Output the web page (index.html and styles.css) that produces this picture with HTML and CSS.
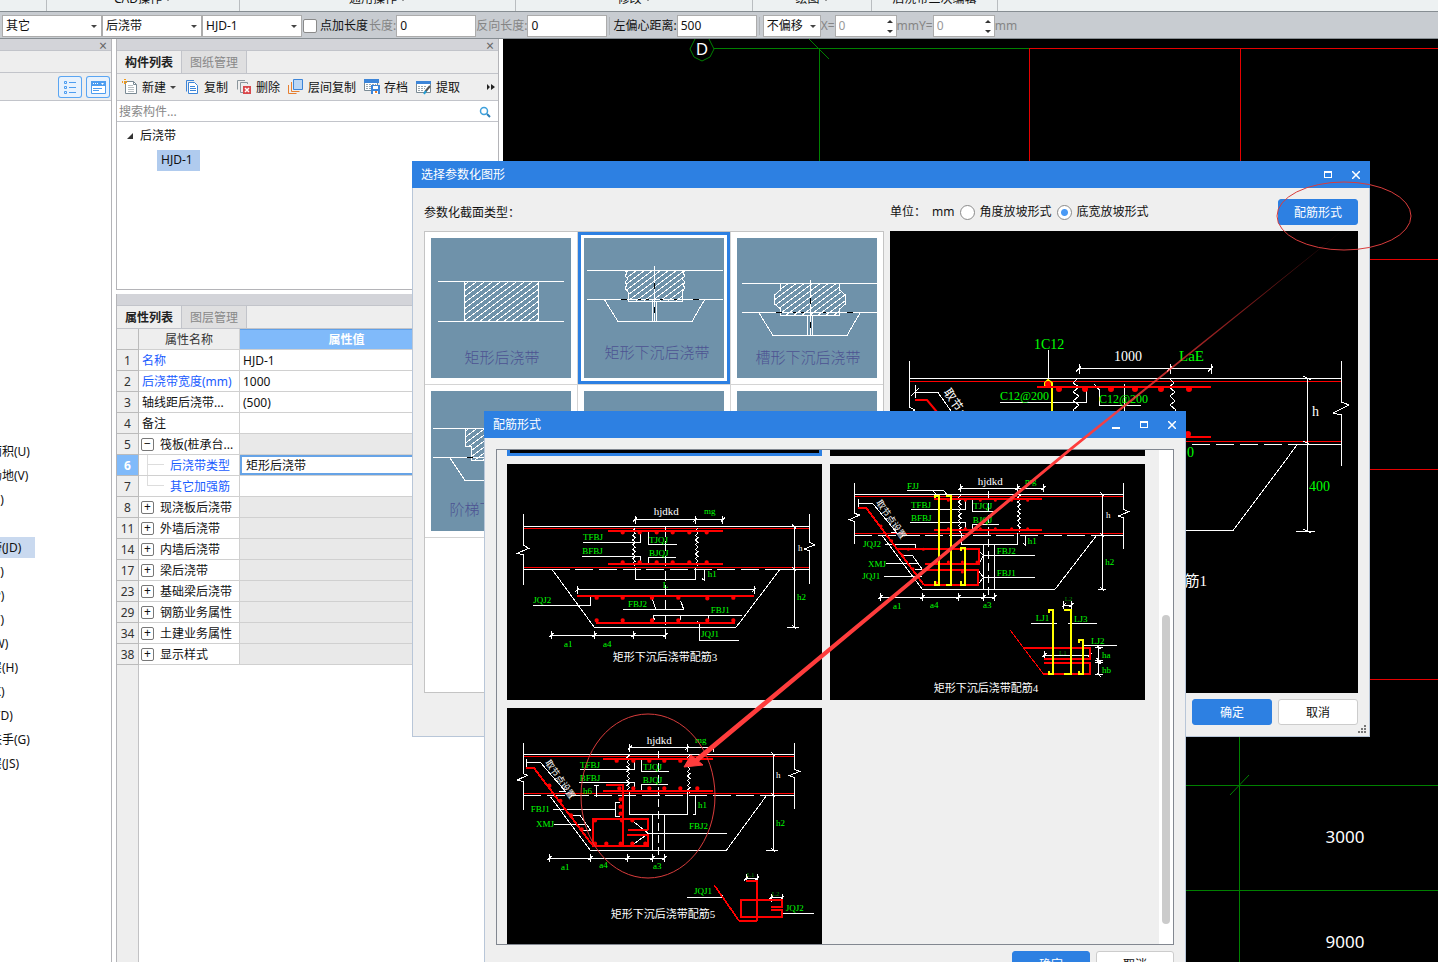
FILE: index.html
```html
<!DOCTYPE html>
<html lang="zh-CN">
<head>
    <meta charset="UTF-8">
    <meta name="viewport" content="width=device-width, initial-scale=1.0">
    <title>后浇带 - 选择参数化图形</title>
    <link rel="stylesheet" href="styles.css">
</head>
<body>
    <!-- shared svg parts -->
    <svg class="defs" aria-hidden="true">
        <defs>
            <pattern id="hatch" width="8" height="6" patternUnits="userSpaceOnUse">
                <path class="line" d="M-4 3L4 -3M0 6L8 0M4 9L12 3"/>
            </pattern>
            <marker id="tick" markerUnits="userSpaceOnUse" markerWidth="30" markerHeight="30" refX="15" refY="15" orient="auto" viewBox="0 0 30 30">
                <path class="w" d="M15 3V27M9 21L21 9"/>
            </marker>
            <marker id="tick-sm" markerUnits="userSpaceOnUse" markerWidth="12" markerHeight="12" refX="6" refY="6" orient="auto" viewBox="0 0 12 12">
                <path class="line" d="M6 1V11M3 9L8 4"/>
            </marker>
            <path id="zig" d="M0 0l-8 7 8 7-8 7 8 7-8 7 8 7-8 7 8 7-8 7 8 7-8 7 8 7-8 7 8 7-8 7 8 7"/>
            <linearGradient id="fade" gradientUnits="userSpaceOnUse" x1="1348" y1="226" x2="1080" y2="444">
                <stop offset="0" stop-color="#f33" stop-opacity="0.15"/>
                <stop offset="1" stop-color="#ff3c3c"/>
            </linearGradient>
        </defs>
    </svg>

    <div class="app">
        <header class="ribbon">
            <span class="group g1">CAD操作 <i class="caret"></i></span>
            <span class="group g2">通用操作 <i class="caret"></i></span>
            <span class="group g3">修改 <i class="caret"></i></span>
            <span class="group g4">绘图 <i class="caret"></i></span>
            <span class="group g5">后浇带二次编辑</span>
        </header>

        <div class="toolbar">
            <span class="combo"><select aria-label="构件类别"><option>其它</option></select></span>
            <span class="combo"><select aria-label="构件类型"><option>后浇带</option></select></span>
            <span class="combo"><select aria-label="构件名称"><option>HJD-1</option></select></span>
            <label class="check"><input type="checkbox">点加长度</label>
            <label class="dim" for="len">长度:</label>
            <input class="field" id="len" type="text" value="0">
            <label class="dim" for="rlen">反向长度:</label>
            <input class="field" id="rlen" type="text" value="0">
            <span class="sep"></span>
            <label for="offset">左偏心距离:</label>
            <input class="field" id="offset" type="text" value="500">
            <span class="sep"></span>
            <span class="combo small"><select aria-label="偏移"><option>不偏移</option></select></span>
            <label class="dim" for="ox">X=</label>
            <span class="spin"><input class="field" id="ox" type="text" value="0" disabled></span>
            <label class="dim" for="oy">mmY=</label>
            <span class="spin"><input class="field" id="oy" type="text" value="0" disabled></span>
            <span class="dim">mm</span>
        </div>

        <main class="workspace">
            <aside class="nav-panel">
                <div class="strip"><button class="close" aria-label="关闭">×</button></div>
                <div class="nav-head"></div>
                <div class="nav-tools">
                    <button class="view-btn" aria-label="列表">
                        <svg width="24" height="22" viewBox="0 0 24 22"><path fill="none" stroke="#4d9df0" d="M6.500 5.500h2v2h-2zM6.500 10.500h2v2h-2zM6.500 15.500h2v2h-2zM11 6.500h7M11 11.500h7M11 16.500h7"/></svg>
                    </button>
                    <button class="view-btn" aria-label="卡片">
                        <svg width="24" height="22" viewBox="0 0 24 22"><path fill="#fff" stroke="#4d9df0" d="M5.500 5.500h14v12h-14z"/><path fill="#4d9df0" d="M5 5h15v5H5zM7 12h9v1H7zM7 14h6v1H7z"/><path fill="#fff" d="M7 7h1v1H7zM9 7h1v1H9zM11 7h1v1h-1zM15 7h3l-1.500 2z"/></svg>
                    </button>
                </div>
                <ul class="nav-list">
                    <li>建筑面积(U)</li>
                    <li>平整场地(V)</li>
                    <li>散水(S)</li>
                    <li></li>
                    <li class="active">后浇带(JD)</li>
                    <li>挑檐(T)</li>
                    <li>雨篷(P)</li>
                    <li>阳台(Y)</li>
                    <li>屋面(W)</li>
                    <li>保温层(H)</li>
                    <li>栏板(K)</li>
                    <li>压顶(YD)</li>
                    <li>栏杆扶手(G)</li>
                    <li>防水层(JS)</li>
                </ul>
            </aside>

            <section class="side">
                <div class="comp-panel">
                    <div class="strip"><button class="close" aria-label="关闭">×</button></div>
                    <div class="tabs">
                        <button class="tab on">构件列表</button>
                        <button class="tab">图纸管理</button>
                    </div>
                    <div class="actions">
                        <button class="act">
                            <svg width="16" height="16" viewBox="0 0 16 16"><path fill="#fff" stroke="#7a8a94" d="M3.500 2.500h8l3 3v9h-11z"/><path fill="none" stroke="#b9c0c4" d="M6 6.500h5M6 8.500h6M6 10.500h6M6 12.500h6"/><path stroke="#7a8a94" fill="none" d="M11.500 2.500v3h3"/><path stroke="#f29b1d" stroke-width="2" stroke-dasharray="1 1" d="M0 3h6M3 0v6"/></svg>
                            <span>新建</span><i class="caret"></i>
                        </button>
                        <button class="act">
                            <svg width="16" height="16" viewBox="0 0 16 16"><path fill="none" stroke="#3d85d8" d="M10 1.500H2.500v11"/><path fill="#fff" stroke="#3d85d8" d="M4.500 3.500h6l3 3v8h-9zM6 7.500h5M6 9.500h6M6 11.500h6"/></svg>
                            <span>复制</span>
                        </button>
                        <button class="act">
                            <svg width="16" height="16" viewBox="0 0 16 16"><path fill="none" stroke="#8b969d" d="M9 1.500H1.500v9M11.500 5V3.500h-7v10H7"/><path fill="#d9484c" d="M7 7h8v8H7z"/><path stroke="#fff" stroke-width="1.500" d="M9 9l4 4M13 9l-4 4"/></svg>
                            <span>删除</span>
                        </button>
                        <button class="act">
                            <svg width="16" height="16" viewBox="0 0 16 16"><path fill="#bcd7f5" stroke="#3d85d8" d="M5.500 .5h9v10h-9z"/><path fill="none" stroke="#e77f30" d="M3.500 3v9.500h8M.5 6v8.500h8"/></svg>
                            <span>层间复制</span>
                        </button>
                        <button class="act">
                            <svg width="16" height="16" viewBox="0 0 16 16"><path fill="#fff" stroke="#7a8a94" d="M.5 1.500h13v10H.5z"/><path fill="#3d85d8" d="M0 0h15v4H0zM7 6h9v9H7z"/><path stroke="#9aa6ad" stroke-dasharray="2 1" d="M2 5.500h10M2 7.500h5M2 9.500h5"/><path fill="#fff" d="M9 7h5v3H9zM9 12h5v3H9z"/><path fill="#e77f30" d="M11 12h2v2h-2z"/></svg>
                            <span>存档</span>
                        </button>
                        <button class="act">
                            <svg width="16" height="16" viewBox="0 0 16 16"><path fill="#fff" stroke="#7a8a94" d="M.5 2.500h14v11H.5z"/><path fill="#3d85d8" d="M0 2h15v3H0z"/><path stroke="#9aa6ad" stroke-dasharray="2 1" d="M2 7.500h9M2 9.500h7M2 11.500h5"/><path stroke="#555" stroke-width="2" d="M14 7l-5 6"/><path stroke="#1f9fd8" stroke-width="2" d="M10 12l-2 3"/></svg>
                            <span>提取</span>
                        </button>
                        <button class="more" aria-label="更多"><svg width="8" height="6" viewBox="0 0 8 6"><path fill="#222" d="M0 0l3 3-3 3zM4 0l4 3-4 3z"/></svg></button>
                    </div>
                    <div class="search">
                        <input type="text" placeholder="搜索构件..." aria-label="搜索构件">
                        <svg width="12" height="12" viewBox="0 0 12 12"><circle cx="5" cy="5" r="3.500" fill="none" stroke="#3da0dc" stroke-width="1.500"/><path stroke="#2b7fb8" stroke-width="2" d="M8 8l3 3"/></svg>
                    </div>
                    <ul class="tree">
                        <li><svg width="6" height="6" viewBox="0 0 6 6"><path fill="#333" d="M6 0v6H0z"/></svg>后浇带</li>
                        <li class="leaf"><span>HJD-1</span></li>
                    </ul>
                </div>

                <div class="prop-panel">
                    <div class="strip"></div>
                    <div class="tabs">
                        <button class="tab on">属性列表</button>
                        <button class="tab">图层管理</button>
                    </div>
                    <div class="prop-body">
                        <table class="props">
                            <thead>
                                <tr><th class="num"></th><th class="name">属性名称</th><th class="value">属性值</th><th class="extra">附加</th></tr>
                            </thead>
                            <tbody>
                                <tr><td class="num">1</td><td class="link">名称</td><td>HJD-1</td><td></td></tr>
                                <tr><td class="num">2</td><td class="link">后浇带宽度(mm)</td><td>1000</td><td></td></tr>
                                <tr><td class="num">3</td><td>轴线距后浇带...</td><td>(500)</td><td></td></tr>
                                <tr><td class="num">4</td><td>备注</td><td></td><td></td></tr>
                                <tr class="grp"><td class="num">5</td><td><button class="box" aria-label="收起">−</button>筏板(桩承台...</td><td></td><td></td></tr>
                                <tr class="sel"><td class="num">6</td><td class="link sub">后浇带类型</td><td>矩形后浇带</td><td></td></tr>
                                <tr><td class="num">7</td><td class="link sub last">其它加强筋</td><td></td><td></td></tr>
                                <tr class="grp"><td class="num">8</td><td><button class="box" aria-label="展开">+</button>现浇板后浇带</td><td></td><td></td></tr>
                                <tr class="grp"><td class="num">11</td><td><button class="box" aria-label="展开">+</button>外墙后浇带</td><td></td><td></td></tr>
                                <tr class="grp"><td class="num">14</td><td><button class="box" aria-label="展开">+</button>内墙后浇带</td><td></td><td></td></tr>
                                <tr class="grp"><td class="num">17</td><td><button class="box" aria-label="展开">+</button>梁后浇带</td><td></td><td></td></tr>
                                <tr class="grp"><td class="num">23</td><td><button class="box" aria-label="展开">+</button>基础梁后浇带</td><td></td><td></td></tr>
                                <tr class="grp"><td class="num">29</td><td><button class="box" aria-label="展开">+</button>钢筋业务属性</td><td></td><td></td></tr>
                                <tr class="grp"><td class="num">34</td><td><button class="box" aria-label="展开">+</button>土建业务属性</td><td></td><td></td></tr>
                                <tr class="grp"><td class="num">38</td><td><button class="box" aria-label="展开">+</button>显示样式</td><td></td><td></td></tr>
                            </tbody>
                        </table>
                    </div>
                </div>
            </section>

            <section class="canvas">
                <svg viewBox="503 39 935 923" preserveAspectRatio="xMinYMin slice">
                    <g class="axis-green">
                        <path d="M714 48.500H1029M819.500 49V962M1239.500 737V962M1186 785.500H1438M1186 890.500H1438"/>
                        <path class="smooth" d="M809 39L829 59M1230 795L1249 775M695 39L690 49L694 57L702 61L710 57L714 49L709 39"/>
                    </g>
                    <path class="axis-red" d="M1029 48.500H1438M1029.500 48V300M1240.500 49V300M1300 259.500H1438M1300 469.500H1438M1300 679.500H1438"/>
                    <text class="axis-text" x="702" y="55">D</text>
                    <text class="axis-text" x="1345" y="843">3000</text>
                    <text class="axis-text" x="1345" y="948">9000</text>
                </svg>
            </section>
        </main>

        <!-- parametric section dialog -->
        <section class="dialog dialog-shape" role="dialog" aria-label="选择参数化图形">
            <div class="title">
                <span>选择参数化图形</span>
                <button aria-label="最大化"><svg width="8" height="8" viewBox="0 0 8 8"><path fill="#fff" d="M0 0h8v7H0zM1 2v4h6V2z" fill-rule="evenodd"/></svg></button>
                <button aria-label="关闭"><svg width="8" height="8" viewBox="0 0 8 8"><path stroke="#fff" stroke-width="1.500" d="M0 0l8 8M8 0L0 8"/></svg></button>
            </div>
            <div class="shape-body">
                <div class="shape-left">
                    <div class="shape-label">参数化截面类型：</div>
                    <div class="thumbs">
                        <button class="thumb">
                            <svg viewBox="0 0 140 140">
                                <path class="hatched" d="M33 43H108V83H33z"/>
                                <path class="line" d="M7 43.500H133M7 83.500H133M33.500 43V83M107.500 43V83"/>
                                <text x="71" y="125">矩形后浇带</text>
                            </svg>
                        </button>
                        <button class="thumb on">
                            <svg viewBox="0 0 140 140">
                                <path class="hatched" d="M41 32l2 3-2 3 3 3-3 3 2 3-2 3 3 4v9H98v-9l3-4-2-3 2-3-3-3 3-3-2-3 2-3z"/>
                                <path class="line" d="M3 32.500H139M3 61.500H139M41 32l2 3-2 3 3 3-3 3 2 3-2 3 3 4v9H98v-9l3-4-2-3 2-3-3-3 3-3-2-3 2-3M20 61L34 83.500H108L121 61M70.500 28V84M68.500 63V83M72.500 63V83"/>
                                <path class="dash" d="M37 61.500h6M54 61.500h3M62 61.500h3M76 61.500h3M90 61.500h3M109 61.500h6M70.500 45v6M70.500 69v6"/>
                                <text x="73" y="120">矩形下沉后浇带</text>
                            </svg>
                        </button>
                        <button class="thumb">
                            <svg viewBox="0 0 140 140">
                                <path class="hatched" d="M43 45V52L37 57V66L43 71V77H102V71L108 66V57L102 52V45z"/>
                                <path class="line" d="M5 45.500H140M5 74.500H140M43.500 45V52L37.500 57V66L43.500 71V77.500H102.500V71L108.500 66V57L102.500 52V45M22 75L36 97.500H110L123 75M73.500 42V97M70.500 77V97M75.500 77V97"/>
                                <path class="dash" d="M39 74.500h6M56 74.500h3M64 74.500h3M86 74.500h3M110 74.500h6M73.500 60v6M73.500 84v6"/>
                                <text x="71" y="125">槽形下沉后浇带</text>
                            </svg>
                        </button>
                        <button class="thumb">
                            <svg viewBox="0 0 140 140">
                                <path class="hatched" d="M34 37V55H40V69H100V55H106V37z"/>
                                <path class="line" d="M2 37.500H138M2 66.500H138M34.500 37V55.500H40.500V69.500H100.500V55.500H106.500V37M19 67L34 89.500H106L121 67"/>
                                <path class="dash" d="M36 66.500h6"/>
                                <text x="71" y="124">阶梯下沉后浇带</text>
                            </svg>
                        </button>
                        <button class="thumb" aria-label="截面5"><svg viewBox="0 0 140 140"></svg></button>
                        <button class="thumb" aria-label="截面6"><svg viewBox="0 0 140 140"></svg></button>
                    </div>
                </div>
                <div class="shape-right">
                    <div class="options">
                        <span>单位：</span>
                        <span>mm</span>
                        <label><input type="radio" name="slope">角度放坡形式</label>
                        <label><input type="radio" name="slope" checked>底宽放坡形式</label>
                        <button class="btn primary">配筋形式</button>
                    </div>
                    <svg class="preview" viewBox="890 231 468 462">
                        <path class="thin-red" d="M909 381.500H1341M909 441.500H1341"/>
                        <path class="line" d="M909 378.500H1341M909.500 361V407L915 410L903 417L909 420V466M1341.500 361V402L1349 405L1333 413L1341.500 415V466M1288 444.500H1341M1297 445L1233 530.500H1010M1296 531.500H1315M1303 376l8 4M1303 441l8 4M1303 529l8 4"/>
                        <path class="line" stroke-dasharray="18 6" d="M1192 444.500H1290"/>
                        <path class="line" d="M1307.500 378V531M1048.500 350V381M1000 402.500H1086.500V391M1141 405.500H1099.500V390L1094 384M1124.500 384V411"/>
                        <path class="line" d="M1077 379l-4 4 6 4-6 5 6 4-6 5 6 4-6 5 4 4M1170 379l4 4-5 4 6 5-5 4 5 5-5 4 6 5-5 4"/>
                        <path class="line ticks-sm" d="M1079 368.500H1170H1211"/>
                        <path class="line" d="M915.500 385V398M911 396l8-8M916 392.500H938L951 411"/>
                        <path class="yellow-sm" d="M1052 385V411M1045 386V383L1048 380L1052 383V386"/>
                        <path class="bar-sm" d="M1037 387H1211M1186 437H1211M915 400H927L937 412"/>
                        <path class="dots-sm" d="M1059 389h0M1085 389h0M1111 389h0M1135 389h0M1161 389h0M1189 389h0M1048 384h0M1188 434h0"/>
                        <g class="labels">
                            <text x="1034" y="349">1C12</text>
                            <text x="1179" y="361" class="big">LaE</text>
                            <text x="1000" y="400" class="fit">C12@200</text>
                            <text x="1099" y="403" class="fit">C12@200</text>
                            <text x="1009" y="419" class="fit">C12@200</text>
                            <text x="1187" y="457">0</text>
                            <text x="1309" y="491">400</text>
                            <text x="1114" y="361" class="white">1000</text>
                            <text x="1312" y="416" class="white">h</text>
                            <text x="1207" y="586" class="white name">矩形下沉后浇带配筋1</text>
                            <text x="943" y="392" class="white fit" transform="rotate(56 943 392)">取节点设置</text>
                        </g>
                    </svg>
                </div>
            </div>
            <div class="buttons">
                <button class="btn primary">确定</button>
                <button class="btn">取消</button>
            </div>
            <svg class="grip" width="8" height="8" viewBox="0 0 8 8"><path fill="#777" d="M6 0h2v2H6zM3 3h2v2H3zM6 3h2v2H6zM0 6h2v2H0zM3 6h2v2H3zM6 6h2v2H6z"/></svg>
        </section>

        <!-- rebar form dialog -->
        <section class="dialog dialog-rebar" role="dialog" aria-label="配筋形式">
            <div class="title">
                <span>配筋形式</span>
                <button aria-label="最小化"><svg width="8" height="8" viewBox="0 0 8 8"><path fill="#fff" d="M0 6h8v2H0z"/></svg></button>
                <button aria-label="最大化"><svg width="8" height="8" viewBox="0 0 8 8"><path fill="#fff" d="M0 0h8v7H0zM1 2v4h6V2z" fill-rule="evenodd"/></svg></button>
                <button aria-label="关闭"><svg width="8" height="8" viewBox="0 0 8 8"><path stroke="#fff" stroke-width="1.500" d="M0 0l8 8M8 0L0 8"/></svg></button>
            </div>
            <div class="list-frame">
                <div class="cards">
                    <button class="card on" aria-label="矩形下沉后浇带配筋1"></button>
                    <button class="card" aria-label="矩形下沉后浇带配筋2"></button>

                    <button class="card">
                        <svg viewBox="21 42 945 708">
                            <path class="r" d="M70 235H928M70 352H928"/>
                            <path class="w" d="M70 192V285L86 295L52 310L70 314V404M928 192V276L944 285L912 297L928 302V402M70 230H928M70 358H155M840 358H928M156 358L283 532H708L840 358M406 355V388H586V355M613 358V390M606 386l8 6"/>
                            <path class="w" stroke-dasharray="54 17" d="M155 358H840"/>
                            <path class="w" stroke-dasharray="30 14" d="M496 230V565"/>
                            <use class="w" href="#zig" x="406" y="235"/>
                            <use class="w" href="#zig" x="594" y="235"/>
                            <path class="w ticks" d="M405 209H586H668"/>
                            <path class="w ticks" d="M232 419H763"/>
                            <path class="w ticks" d="M154 555H284H401H496"/>
                            <path class="w ticks" d="M883 230V358V532"/>
                            <path class="w" d="M862 532H897M248 277H421V250M246 319H421V335M531 283H445V245L438 240M528 322H445V345M99 466H271V440L264 436M369 478H551L542 452M456 445L468 478M726 496H460L463 510M540 496V510M625 496V508M716 571H599V520L592 514"/>
                            <path class="bar" d="M324 242H668M324 342H668M232 438H762M288 518H706"/>
                            <path class="dots" d="M368 247h0M419 247h0M470 247h0M518 247h0M568 247h0M620 247h0M368 337h0M419 337h0M470 337h0M518 337h0M568 337h0M620 337h0M290 443h0M368 443h0M456 443h0M535 443h0M622 445h0M700 443h0M290 511h0M368 511h0M456 511h0M535 511h0M622 511h0M700 511h0"/>
                            <g class="tags">
                                <text x="461" y="196" class="white wide">hjdkd</text>
                                <text x="612" y="192">mg</text>
                                <text x="249" y="271">TFBJ</text>
                                <text x="247" y="313">BFBJ</text>
                                <text x="447" y="280">TJQJ</text>
                                <text x="447" y="319">BJQJ</text>
                                <text x="894" y="302" class="white">h</text>
                                <text x="623" y="382">h1</text>
                                <text x="488" y="415">L</text>
                                <text x="891" y="451">h2</text>
                                <text x="100" y="458">JQJ2</text>
                                <text x="384" y="472">FBJ2</text>
                                <text x="632" y="490">FBJ1</text>
                                <text x="603" y="562">JQJ1</text>
                                <text x="192" y="590">a1</text>
                                <text x="309" y="590">a4</text>
                            </g>
                            <text class="caption" x="338" y="634">矩形下沉后浇带配筋3</text>
                        </svg>
                    </button>

                    <button class="card">
                        <svg viewBox="15 42 945 708">
                            <path class="r" d="M88 139H895M88 250H895"/>
                            <path class="w" d="M88 99V190L104 195L73 209L88 214V282M895 99V178L911 185L880 198L895 203V296M88 133H895M840 256H895M172 258L292 418H690L815 256M409 250V283H577V250M475 283V418M508 283V418M601 256V284M594 280l8 6"/>
                            <path class="w" stroke-dasharray="54 17" d="M88 256H840"/>
                            <path class="w" stroke-dasharray="24 12" d="M490 123V440"/>
                            <use class="w" href="#zig" x="408" y="135"/>
                            <use class="w" href="#zig" x="586" y="135"/>
                            <path class="w ticks" d="M406 115H577H655"/>
                            <path class="w ticks" d="M166 441H292H401H475H508"/>
                            <path class="w ticks" d="M832 133V256V418"/>
                            <path class="w ticks" d="M658 615H795"/>
                            <path class="w ticks" d="M716 466H739"/>
                            <path class="w ticks" d="M821 592V630"/>
                            <path class="w ticks" d="M821 636V674"/>
                            <path class="w" d="M101 148V172M101 160H143L215 248H198M246 121H355L370 138M322 121L338 138M258 178H421V150M255 217H421V238M514 184H442V150M522 223H442V240M180 283H271V296M183 341H280M177 379H290M232 316H262L292 358H270M630 317H475L462 302M475 317L462 340M630 382H475L460 362M475 382L460 402M617 520H696M730 520H816M876 586H778"/>
                            <path class="bar" d="M327 147H651M327 240H651M218 297H462V342H300M290 360H460V404H296M98 173H123L296 404M594 594H795V627H657M657 639H795V672H655"/>
                            <path class="r" d="M556 541L655 672"/>
                            <path class="dots small" d="M370 151h0M421 151h0M466 151h0M511 151h0M560 151h0M608 151h0M370 236h0M421 236h0M466 236h0M511 236h0M560 236h0M608 236h0M168 228h0M200 272h0M232 316h0M264 356h0M250 298h0M295 298h0M334 336h0M370 336h0M412 336h0M334 398h0M412 366h0M456 336h0"/>
                            <path class="yellow" d="M329 145V138H342V404H329V394M362 138H378V404H362M408 304V294H420V404H408V394M672 488V480H684V672H672V662M717 480H739V672H717M762 580V571H774V672H762V662"/>
                            <g class="tags">
                                <text x="246" y="116">FJJ</text>
                                <text x="458" y="104" class="white wide">hjdkd</text>
                                <text x="600" y="103">mg</text>
                                <text x="258" y="173">TFBJ</text>
                                <text x="258" y="212">BFBJ</text>
                                <text x="445" y="178">TJQJ</text>
                                <text x="443" y="218">BJQJ</text>
                                <text x="843" y="204" class="white">h</text>
                                <text x="608" y="282">h1</text>
                                <text x="841" y="345">h2</text>
                                <text x="114" y="290">JQJ2</text>
                                <text x="129" y="350">XMJ</text>
                                <text x="112" y="387">JQJ1</text>
                                <text x="515" y="311">FBJ2</text>
                                <text x="515" y="377">FBJ1</text>
                                <text x="204" y="476">a1</text>
                                <text x="315" y="474">a4</text>
                                <text x="474" y="473">a3</text>
                                <text x="719" y="453" class="dark">L2</text>
                                <text x="632" y="513">LJ1</text>
                                <text x="747" y="515">LJ3</text>
                                <text x="798" y="581">LJ2</text>
                                <text x="702" y="615" class="dark">L1</text>
                                <text x="831" y="624">ha</text>
                                <text x="831" y="668">hb</text>
                                <text x="152" y="158" class="white" transform="rotate(55 152 158)">取节点设置</text>
                            </g>
                            <text class="caption" x="326" y="727">矩形下沉后浇带配筋4</text>
                        </svg>
                    </button>

                    <button class="card">
                        <svg viewBox="21 24 945 708">
                            <path class="r" d="M70 169H883M70 280H883"/>
                            <path class="w" d="M70 129V221L82 226L52 240L70 245V330M883 129V208L899 214L868 227L883 233V326M70 163H883M820 286H883M151 290L271 451H679L800 286M388 275V343H562V275M457 343V451M493 343V451M586 286V346M579 343h8"/>
                            <path class="w" stroke-dasharray="54 17" d="M70 286H820"/>
                            <path class="w" stroke-dasharray="24 12" d="M475 153V470"/>
                            <use class="w" href="#zig" x="389" y="165"/>
                            <use class="w" href="#zig" x="570" y="165"/>
                            <path class="w ticks" d="M389 143H562H640"/>
                            <path class="w ticks" d="M149 474H271H383H457H493"/>
                            <path class="w ticks" d="M820 163V286V451"/>
                            <path class="w ticks" d="M738 535H771"/>
                            <path class="w ticks" d="M813 593H847"/>
                            <path class="w" d="M799 451H834M80 177V202M80 188H122L196 274H178M240 208H403V180M238 247H403V262M507 214H424V180M505 253H424V270M290 256V290M283 256h14M160 328H346M360 308H346V350H360M161 373H254M218 346H240L272 391H250M681 400H445L403 367M445 400L403 431M561 592H670L664 582M942 640H850"/>
                            <path class="bar" d="M309 177H640M309 272H640M78 204H102L278 436M318 255H369V438M445 391V357H278V438H445V404H381M383 391H445M738 543H771V663M847 623V600H723V651H847V630H813M813 620H847"/>
                            <path class="r2" d="M643 556L717 662H771"/>
                            <path class="dots" d="M350 182h0M400 182h0M448 182h0M493 182h0M541 182h0M592 182h0M358 265h0M400 265h0M448 265h0M493 265h0M541 265h0M592 265h0M148 257h0M181 303h0M213 346h0M245 388h0M362 298h0M362 320h0M362 341h0M285 361h0M366 361h0M397 361h0M319 431h0M362 431h0M397 431h0M436 431h0M285 431h0"/>
                            <g class="tags">
                                <text x="440" y="131" class="white wide">hjdkd</text>
                                <text x="585" y="130">mg</text>
                                <text x="240" y="203">TFBJ</text>
                                <text x="239" y="242">BFBJ</text>
                                <text x="429" y="209">TJQJ</text>
                                <text x="428" y="248">BJQJ</text>
                                <text x="828" y="233" class="white">h</text>
                                <text x="249" y="281">h6</text>
                                <text x="594" y="324">h1</text>
                                <text x="828" y="377">h2</text>
                                <text x="92" y="335">FBJ1</text>
                                <text x="108" y="381">XMJ</text>
                                <text x="567" y="388">FBJ2</text>
                                <text x="183" y="509">a1</text>
                                <text x="298" y="503">a4</text>
                                <text x="459" y="506">a3</text>
                                <text x="740" y="530" class="dark">L1</text>
                                <text x="815" y="587" class="dark">L2</text>
                                <text x="582" y="581">JQJ1</text>
                                <text x="857" y="632">JQJ2</text>
                                <text x="134" y="188" class="white" transform="rotate(55 134 188)">取节点设置</text>
                            </g>
                            <text class="caption" x="332" y="655">矩形下沉后浇带配筋5</text>
                        </svg>
                    </button>
                </div>
                <div class="track"><div class="bar-thumb"></div></div>
            </div>
            <div class="buttons">
                <button class="btn primary">确定</button>
                <button class="btn">取消</button>
            </div>
        </section>

        <!-- red pen marks over both dialogs -->
        <svg class="marks" viewBox="0 0 1438 962" preserveAspectRatio="xMinYMin slice" aria-hidden="true">
            <ellipse cx="1344" cy="216" rx="67" ry="34"/>
            <ellipse cx="648" cy="796" rx="67" ry="82"/>
            <path fill="url(#fade)" d="M1348 226L1073 449L697 763L694 759L1071 447z"/>
            <path class="head" d="M684 767L691 755L703 765z"/>
        </svg>
    </div>
</body>
</html>
```
FILE: styles.css
```css
* {
    margin: 0;
    padding: 0;
    box-sizing: border-box;
}

body {
    font-family: "Noto Sans", "Noto Sans CJK SC", sans-serif;
    font-size: 12px;
    line-height: 16px;
    color: #111;
    overflow: hidden;
}

button,
input,
select {
    font: inherit;
    color: inherit;
    border: none;
    background: none;
    border-radius: 0;
}

ul {
    list-style: none;
}

.defs {
    display: block;
    width: 0;
    height: 0;
}

.app {
    position: relative;
    display: flex;
    flex-direction: column;
    height: 100vh;
    overflow: hidden;
}

.caret {
    display: inline-block;
    border: 3px solid transparent;
    border-top-color: #444;
    border-bottom: none;
    vertical-align: middle;
}

/* ribbon */
.ribbon {
    display: flex;
    align-items: flex-end;
    height: 12px;
    flex: none;
    padding-left: 46px;
    background: #edf1f2;
    border-bottom: 1px solid #868d92;
    overflow: hidden;
    box-shadow: inset 46px 0 #edf1f2, inset 47px 0 #b9bdc0;
}

.group {
    height: 20px;
    padding-bottom: 4px;
    text-align: center;
    line-height: 16px;
    border-right: 1px solid #b9bdc0;
}

.g1 { width: 194px; }
.g2 { width: 276px; }
.g3 { width: 237px; }
.g4 { width: 119px; }
.g5 { width: 126px; }

/* toolbar */
.toolbar {
    display: flex;
    align-items: center;
    flex: none;
    height: 27px;
    padding: 1px 0 0 2px;
    background: #c8ccd1;
    border-bottom: 1px solid #868d92;
    white-space: nowrap;
}

.combo,
.spin {
    position: relative;
    display: flex;
}

.combo select {
    width: 100px;
    height: 22px;
    padding: 0 3px;
    appearance: none;
    background: #fff;
    border: 1px solid #acacac;
}

.combo.small select {
    width: 58px;
}

.combo::after {
    content: "";
    position: absolute;
    right: 5px;
    top: 10px;
    border: 3px solid transparent;
    border-top-color: #444;
    border-bottom: none;
}

.field {
    width: 80px;
    height: 22px;
    padding: 0 3px;
    background: #fff;
    border: 1px solid #acacac;
}

.spin .field {
    width: 62px;
    color: #999;
}

.spin::before,
.spin::after {
    content: "";
    position: absolute;
    right: 4px;
    border: 3px solid transparent;
}

.spin::before {
    top: 5px;
    border-bottom-color: #333;
    border-top: none;
}

.spin::after {
    bottom: 4px;
    border-top-color: #333;
    border-bottom: none;
}

.check {
    display: flex;
    align-items: center;
    gap: 3px;
    padding: 0 1px;
}

.check input {
    width: 14px;
    height: 14px;
    appearance: none;
    background: #fff;
    border: 1px solid #8a8a8a;
    border-radius: 2px;
}

.toolbar .dim {
    color: #858585;
}

.sep {
    width: 1px;
    height: 18px;
    margin: 0 3px 0 2px;
    background: #b0b4b8;
}

/* workspace */
.workspace {
    display: flex;
    flex: 1;
    min-height: 0;
}

.strip {
    display: flex;
    justify-content: flex-end;
    height: 12px;
    padding-right: 3px;
    background: #d3d4d9;
    border-bottom: 1px solid #c2c4ca;
}

.close {
    width: 10px;
    line-height: 14px;
    font-size: 14px;
    color: #666;
}

.nav-panel {
    flex: none;
    width: 112px;
    background: #fff;
    border-right: 1px solid #b4b4b8;
    overflow: hidden;
}

.nav-head {
    height: 22px;
    background: #eee;
    border-bottom: 1px solid #c2c4ca;
}

.nav-tools {
    display: flex;
    justify-content: flex-end;
    align-items: center;
    gap: 4px;
    height: 28px;
    padding-right: 1px;
    background: #eee;
    border-bottom: 1px solid #c2c4ca;
}

.view-btn {
    display: flex;
    width: 24px;
    height: 22px;
    background: #e8f2fd;
    border-radius: 3px;
    box-shadow: inset 0 0 0 1px #5aa5f2;
}

/* the tree is scrolled right, its left part is cut off */
.nav-list {
    margin: 340px 0 0 -36px;
}

.nav-list li {
    width: 71px;
    height: 21px;
    margin-bottom: 3px;
    padding: 1px 0 0 2px;
    line-height: 20px;
    white-space: nowrap;
}

.nav-list .active {
    background: #c9d9ef;
}

.side {
    display: flex;
    flex-direction: column;
    flex: none;
    width: 383px;
    margin: 0 4px;
    gap: 4px;
    border-right: 1px solid #b4b4b8;
}

.comp-panel {
    height: 251px;
    border: 1px solid #b4b4b8;
    border-width: 0 0 1px 1px;
}

.prop-panel {
    display: flex;
    flex-direction: column;
    flex: 1;
    border-left: 1px solid #b4b4b8;
}

.tabs {
    display: flex;
    height: 23px;
    background: #eee;
    border-bottom: 1px solid #c2c4ca;
}

.tab {
    width: 65px;
    padding-top: 2px;
    color: #888;
    background: #dfdfe0;
    border-right: 1px solid #c2c4ca;
}

.tab.on {
    color: #222;
    font-weight: bold;
    background: #eee;
}

.actions {
    display: flex;
    align-items: center;
    gap: 8px;
    height: 27px;
    padding: 0 3px 0 5px;
    background: #eee;
    border-bottom: 1px solid #c2c4ca;
    white-space: nowrap;
}

.act {
    display: flex;
    align-items: center;
    gap: 4px;
}

.act span {
    padding-top: 2px;
}

.more {
    display: flex;
    margin-left: auto;
}

.search {
    display: flex;
    align-items: center;
    height: 21px;
    padding: 1px 7px 0 2px;
    background: #fff;
    border-bottom: 1px solid #c2c4ca;
}

.search input {
    flex: 1;
    outline: none;
}

.search input::placeholder {
    color: #888;
}

.tree {
    padding: 4px 0 0 10px;
}

.tree li {
    display: flex;
    align-items: center;
    gap: 7px;
    height: 20px;
}

.tree .leaf {
    margin-top: 4px;
    padding-left: 30px;
}

.leaf span {
    padding: 2px 7px 3px 4px;
    background: #b0cbee;
}

/* property table */
.prop-body {
    flex: 1;
    background: linear-gradient(to right, #eee 21px, #c2c2c4 21px, #c2c2c4 22px, #fff 22px);
}

.props {
    width: 100%;
    border-collapse: separate;
    border-spacing: 0;
    table-layout: fixed;
    background: #fff;
}

.props th,
.props td {
    height: 21px;
    padding: 2px 3px 0;
    line-height: 16px;
    border-right: 1px solid #d0d0d0;
    border-bottom: 1px solid #d0d0d0;
    white-space: nowrap;
    overflow: hidden;
}

.props th {
    font-weight: normal;
    color: #333;
    background: #eee;
}

.props .num {
    width: 22px;
    padding: 2px 0 0;
    text-align: center;
    color: #333;
    background: #eee;
    border-right-color: #bbb;
    border-bottom-color: #bbb;
}

.props .name {
    width: 101px;
}

.props .extra {
    width: 44px;
}

.props th.value {
    font-weight: bold;
    color: #fff;
    background: #80bafa;
    box-shadow: inset 0 1px #60a0e8;
}

.props .link {
    color: #1a5cff;
}

.props .grp td:nth-child(n+3) {
    background: #e9e9e9;
}

.props .grp td:nth-child(2) {
    padding-left: 2px;
}

.props .sel .num {
    color: #fff;
    font-weight: bold;
    background: #80bafa;
}

.props .sel td:nth-child(3) {
    padding-left: 6px;
    box-shadow: inset 0 0 0 2px #66a3e6;
}

.props td.sub {
    padding-left: 31px;
    background: linear-gradient(#ddd, #ddd) 8px 9px / 17px 1px no-repeat, linear-gradient(#ddd, #ddd) 8px 0 / 1px 100% no-repeat;
}

.props td.sub.last {
    background-size: 17px 1px, 1px 9px;
}

.box {
    width: 13px;
    height: 13px;
    margin-right: 6px;
    font-size: 12px;
    line-height: 10px;
    vertical-align: 1px;
    border: 1px solid #777;
    border-radius: 2px;
}

/* drawing area */
.canvas {
    flex: 1;
    min-width: 0;
    background: #000;
}

.canvas svg {
    display: block;
    width: 100%;
    height: 100%;
}

.axis-green,
.axis-red {
    fill: none;
    stroke: #008000;
    shape-rendering: crispEdges;
}

.axis-red {
    stroke: #e60000;
}

.smooth {
    shape-rendering: auto;
}

.axis-text {
    fill: #fff;
    font-size: 17px;
    text-anchor: middle;
}

/* dialogs */
.dialog {
    position: absolute;
    display: flex;
    flex-direction: column;
    background: #efefef;
    box-shadow: inset 0 0 0 1px #b8c6d8;
}

.dialog-shape {
    left: 412px;
    top: 161px;
    width: 958px;
    height: 576px;
}

.dialog-rebar {
    left: 484px;
    top: 411px;
    width: 702px;
    height: 578px;
}

.title {
    display: flex;
    align-items: center;
    gap: 20px;
    flex: none;
    height: 27px;
    padding: 0 10px 0 9px;
    color: #fff;
    background: #2d80e2;
}

.title span {
    flex: 1;
}

.title button {
    display: flex;
}

.shape-body {
    display: flex;
    gap: 6px;
    padding: 0 12px;
}

.shape-left {
    display: flex;
    flex-direction: column;
    width: 460px;
}

.shape-label {
    height: 43px;
    padding-top: 17px;
}

.thumbs {
    display: grid;
    grid-template-columns: 153px 153px 152px;
    grid-auto-rows: 153px;
    flex: 1;
    background: #fff;
    border: 1px solid #c4c4c4;
}

.thumb {
    padding: 6px;
    border: 1px solid #d4d4d4;
    border-width: 0 1px 1px 0;
}

.thumb:nth-child(3n) {
    border-right: none;
}

.thumb.on {
    box-shadow: inset 0 0 0 3px #2d80e2;
}

.thumb svg {
    display: block;
    width: 140px;
    height: 140px;
    background: #6f92aa;
}

.thumb text {
    fill: #4d5292;
    font-size: 15px;
    font-weight: 300;
    text-anchor: middle;
}

.line {
    fill: none;
    stroke: #fff;
    shape-rendering: crispEdges;
}

.hatched {
    fill: url(#hatch);
}

.dash {
    stroke: #000;
    shape-rendering: crispEdges;
}

.shape-right {
    flex: 1;
}

.options {
    display: flex;
    align-items: center;
    gap: 6px;
    height: 43px;
    padding-top: 5px;
}

.options label {
    display: flex;
    align-items: center;
    gap: 4px;
}

.options input {
    width: 15px;
    height: 15px;
    appearance: none;
    background: #fff;
    border: 1px solid #8a8a8a;
    border-radius: 50%;
}

.options input:checked {
    background: radial-gradient(#4a9af5 3px, #fff 4px);
}

.btn {
    width: 80px;
    height: 26px;
    padding-top: 1px;
    background: #fff;
    border: 1px solid #ccc;
    border-radius: 3px;
}

.btn.primary {
    color: #fff;
    background: #2d80e2;
    border-color: #2d80e2;
}

.options .btn {
    margin-left: auto;
}

.buttons {
    display: flex;
    justify-content: flex-end;
    gap: 6px;
    padding: 6px 12px 0;
}

.grip {
    position: absolute;
    right: 4px;
    bottom: 4px;
}

.preview {
    display: block;
    width: 100%;
    background: #000;
}

.thin-red {
    stroke: #f00;
    shape-rendering: crispEdges;
}

.bar-sm,
.yellow-sm {
    fill: none;
    stroke: #f00;
    stroke-width: 2;
}

.yellow-sm {
    stroke: #ff0;
}

.dots-sm {
    stroke: #f00;
    stroke-width: 6;
    stroke-linecap: round;
}

.ticks-sm {
    marker: url(#tick-sm);
}

.labels text {
    fill: #0f0;
    font-family: "Liberation Serif", "Noto Sans CJK SC", serif;
    font-size: 14px;
}

.labels .big {
    font-size: 15px;
}

.labels .fit {
    font-size: 12px;
}

.labels .name {
    font-size: 15px;
    text-anchor: end;
}

.labels .white,
.tags .white {
    fill: #fff;
}

/* rebar cards, drawn at three units per pixel */
.list-frame {
    display: flex;
    justify-content: space-between;
    height: 496px;
    margin: 11px 12px 0;
    padding-left: 10px;
    border: 1px solid #828790;
    overflow: hidden;
}

.cards {
    display: grid;
    grid-template-columns: 315px 315px;
    grid-auto-rows: 236px;
    gap: 8px;
    align-content: end;
}

.card {
    background: #000;
}

.card.on {
    border: 3px solid #2d80e2;
}

.card svg {
    display: block;
    width: 315px;
    height: 236px;
}

.track {
    width: 14px;
    padding: 165px 3px 20px;
    background: #fff;
}

.bar-thumb {
    height: 100%;
    background: #cbcbcb;
    border-radius: 4px;
}

.w,
.r,
.r2,
.bar,
.yellow {
    fill: none;
    stroke: #fff;
    stroke-width: 3;
    shape-rendering: crispEdges;
}

.r {
    stroke: #f00;
}

.r2 {
    stroke: #f00;
    stroke-width: 5;
}

.bar {
    stroke: #f00;
    stroke-width: 6;
}

.yellow {
    stroke: #ff0;
    stroke-width: 6;
}

.dots {
    stroke: #f00;
    stroke-width: 13;
    stroke-linecap: round;
}

.dots.small {
    stroke-width: 9;
}

.ticks {
    marker: url(#tick);
}

.tags text {
    fill: #0f0;
    font-family: "Liberation Serif", "Noto Sans CJK SC", serif;
    font-size: 27px;
}

.tags .wide {
    font-size: 33px;
}

.tags .dark {
    fill: #008a00;
    font-size: 21px;
}

.caption {
    fill: #fff;
    font-family: "Liberation Serif", "Noto Sans CJK SC", serif;
    font-size: 33px;
}

.dialog-rebar .btn {
    width: 78px;
}

/* pen marks */
.marks {
    position: absolute;
    inset: 0;
    width: 100%;
    height: 100%;
    pointer-events: none;
}

.marks ellipse {
    fill: none;
    stroke: #d93c3c;
}

.marks .head {
    fill: #ff3c3c;
    stroke: #ff3c3c;
}
```
